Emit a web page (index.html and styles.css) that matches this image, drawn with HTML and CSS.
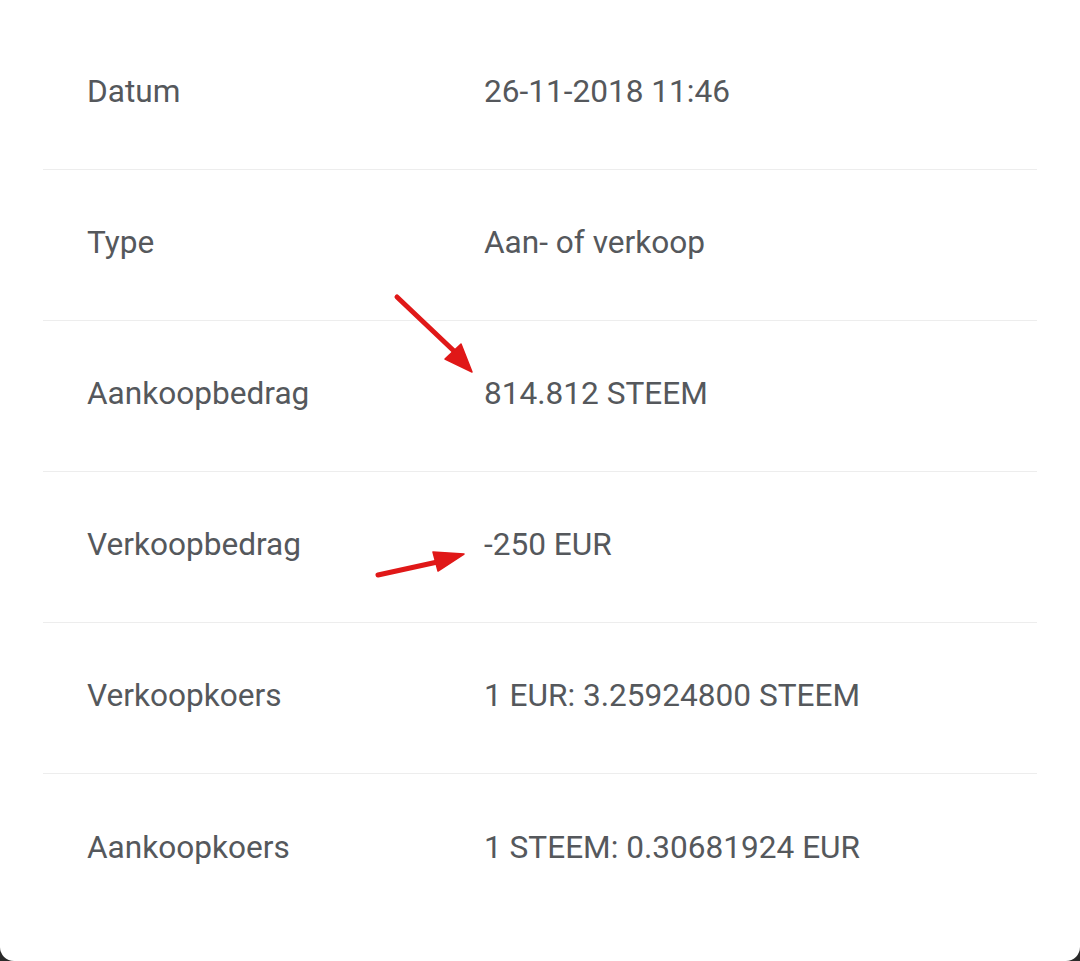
FILE: index.html
```html
<!DOCTYPE html>
<html lang="nl">
<head>
<meta charset="utf-8">
<title>Transactie</title>
<link rel="stylesheet" href="styles.css">
</head>
<body>
<div class="card">
  <div class="row"><div class="label">Datum</div><div class="value">26-11-2018 11:46</div></div>
  <div class="row"><div class="label">Type</div><div class="value">Aan- of verkoop</div></div>
  <div class="row"><div class="label">Aankoopbedrag</div><div class="value">814.812 STEEM</div></div>
  <div class="row"><div class="label">Verkoopbedrag</div><div class="value">-250 EUR</div></div>
  <div class="row"><div class="label">Verkoopkoers</div><div class="value">1 EUR: 3.25924800 STEEM</div></div>
  <div class="row"><div class="label">Aankoopkoers</div><div class="value">1 STEEM: 0.30681924 EUR</div></div>
  <svg class="arrows" width="1080" height="961" viewBox="0 0 1080 961" aria-hidden="true">
    <g stroke="#e01818" stroke-width="5" stroke-linecap="round" fill="#e01818">
      <line x1="397" y1="297" x2="455" y2="352"/>
      <polygon points="472,372 445,359 461,344" stroke-width="1.5" stroke-linejoin="round"/>
      <line x1="378" y1="575" x2="442" y2="561"/>
      <polygon points="464,554 438,571 433,552" stroke-width="1.5" stroke-linejoin="round"/>
    </g>
  </svg>
</div>
</body>
</html>
```
FILE: styles.css
```css
html, body {
  margin: 0;
  padding: 0;
  background: #2a2a2a;
}
body {
  width: 1080px;
  height: 961px;
  overflow: hidden;
}
.card {
  position: relative;
  box-sizing: border-box;
  width: 1080px;
  height: 961px;
  background: #ffffff;
  border-radius: 0 0 14px 14px;
  padding: 19px 43px 0 43px;
  font-family: Roboto, "Liberation Sans", sans-serif;
  font-size: 31.6px;
  color: #55585c;
}
.row {
  display: flex;
  align-items: center;
  box-sizing: border-box;
  height: 151px;
  padding-bottom: 5px;
  border-bottom: 1px solid #ededed;
}
.row:last-of-type {
  border-bottom: none;
}
.label {
  width: 397px;
  padding-left: 44px;
}
.value {
  flex: 1;
}
.arrows {
  position: absolute;
  left: 0;
  top: 0;
  pointer-events: none;
}
```
